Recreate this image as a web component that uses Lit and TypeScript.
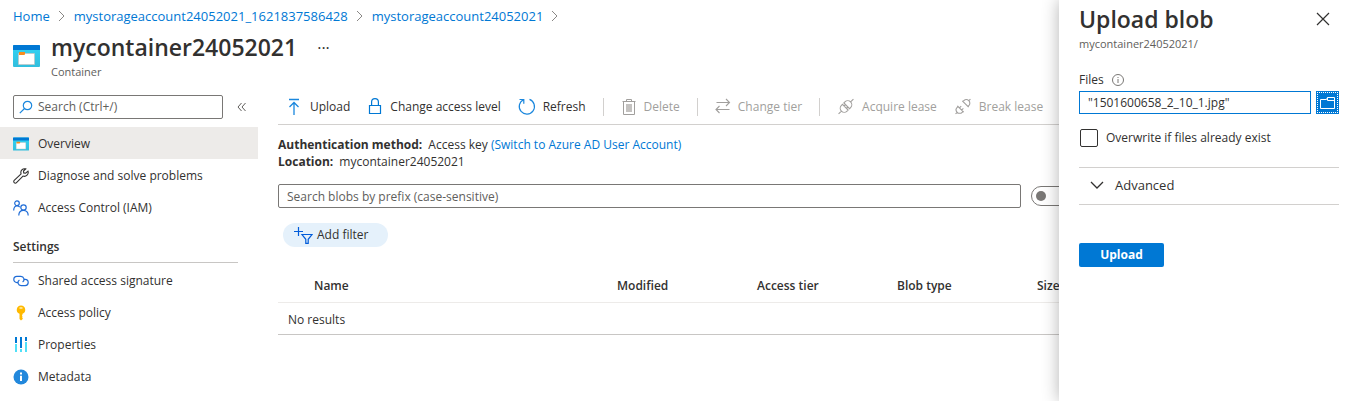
import { LitElement, html, svg, css } from "lit";
import { customElement, state } from "lit/decorators.js";

const icons = {
  container: svg`<svg viewBox="0 0 27 22" width="27" height="22"><defs><linearGradient id="cg" x1="0" y1="0" x2="0" y2="1"><stop offset="0" stop-color="#32d4f5"/><stop offset="1" stop-color="#32bedd"/></linearGradient></defs><rect width="27" height="22" rx="1" fill="url(#cg)"/><path d="M1 0h25a1 1 0 0 1 1 1v4H0V1a1 1 0 0 1 1-1z" fill="#0078d4"/><rect x="5" y="8" width="17" height="12" rx="1" fill="#b8cdd0"/><path d="M6 9h15v10H6z" fill="#fff"/><path d="M6 7h6v2.500l-1 .5H6z" fill="#f78d1e"/></svg>`,
  wrench: svg`<svg viewBox="0 0 16 16" width="16" height="16" fill="none" stroke="#323130" stroke-width="1.100"><path d="M15 3.200 12.600 5.200l-1.900-.3-.2-1.900L12.700.9a3.800 3.800 0 0 0-4.600 5L1.200 12.400a1.600 1.600 0 0 0 2.300 2.300L10 8.100a3.900 3.900 0 0 0 5-4.900z"/></svg>`,
  people: svg`<svg viewBox="0 0 16 16" width="16" height="16" fill="none" stroke="#1f6cd6" stroke-width="1.200"><circle cx="4" cy="3.200" r="2.300"/><path d="M.7 10.500C.7 7.500 2 5.800 4 5.800c1.300 0 2.200.5 2.800 1.300"/><circle cx="10.500" cy="7.500" r="2.700"/><path d="M5.800 15.500c0-3.200 2-5.200 4.700-5.200s4.700 2 4.700 5.200"/></svg>`,
  link: svg`<svg viewBox="0 0 16 16" width="16" height="16" fill="none" stroke="#1f6cd6" stroke-width="1.200"><path d="M5 9.600H3.900a3 3 0 0 1 0-6.200h4a3.100 3.100 0 0 1 1.700 5.700"/><path d="M11 6.400h1.100a3 3 0 0 1 0 6.200h-4a3.100 3.100 0 0 1-1.700-5.700"/></svg>`,
  key: svg`<svg viewBox="0 0 16 16" width="16" height="16"><path fill="#ffb900" d="M8 .5a4.300 4.300 0 0 0-1.500 8.300V14L8 15.500l1.700-1.600v-1l-.8-.8.8-.9-.8-.8.6-.8V8.800A4.300 4.300 0 0 0 8 .5z"/><path d="M6.500 3h3" stroke="#fff3c4" stroke-width="1.400"/></svg>`,
  sliders: svg`<svg viewBox="0 0 16 16" width="16" height="16"><path fill="#0078d4" d="M2 0h2v6H2zM7 0h2v11H7zM12 0h2v4h-2z"/><path fill="#50e0f8" d="M2 7h2v8H2zM7 12h2v3H7zM12 5h2v10h-2z"/></svg>`,
  info: svg`<svg viewBox="0 0 16 16" width="16" height="16"><circle cx="8" cy="8" r="7.500" fill="#2288dc"/><path d="M7 6.800h2V12H7zM7 3.600h2v2H7z" fill="#fff"/></svg>`,
  upload: svg`<svg viewBox="0 0 16 18" width="16" height="18" fill="none" stroke="#1b87dd" stroke-width="1.300"><path d="M2 1.500h10M7 17V4.500M2.500 9 7 4.500 11.500 9"/></svg>`,
  lock: svg`<svg viewBox="0 0 16 18" width="16" height="18" fill="none" stroke="#0078d4" stroke-width="1.200"><path d="M2.500 7.500h11v8h-11zM4.600 7.500V4a3.400 3.400 0 0 1 6.800 0v3.500"/></svg>`,
  refresh: svg`<svg viewBox="0 0 18 18" width="18" height="18" fill="none" stroke="#1b87dd" stroke-width="1.200"><path d="M11.500 1.400a7.600 7.600 0 1 1-6 .3M1.500 1.500h4.300v4.300"/></svg>`,
  trash: svg`<svg viewBox="0 0 16 18" width="16" height="18" fill="none" stroke="#a19f9d"><path d="M1.500 3.500h13M5.500 3V1.500h5V3M2.500 3.500v13h11v-13"/><path d="M5 6h6v8H5z" fill="#c4c2c0" stroke="none"/></svg>`,
  swap: svg`<svg viewBox="0 0 16 18" width="16" height="18" fill="none" stroke="#a19f9d" stroke-width="1.100"><path d="M1.500 4.500h13M11 1l3.500 3.500L11 8M14.500 11.500H1M4.500 8 1 11.500 4.500 15"/></svg>`,
  plug: svg`<svg viewBox="0 0 18 18" width="18" height="18" fill="none" stroke="#a19f9d" stroke-width="1.100"><g transform="rotate(-45 9 8.500)"><path d="M-1.500 8.500h4M15.500 8.500h4M8 4.500H6.500a4 4 0 0 0 0 8H8zM10 4.500h1.500a4 4 0 0 1 0 8H10zM8 6.800h2M8 10.200h2"/></g></svg>`,
  unplug: svg`<svg viewBox="0 0 18 18" width="18" height="18" fill="none" stroke="#a19f9d" stroke-width="1.100"><g transform="rotate(-45 9 8.500)"><path d="M-1.500 8.500h2.500M17 8.500h2.500M5.500 5H4.300a3.500 3.500 0 0 0 0 7h1.200zM12.500 5h1.200a3.500 3.500 0 0 1 0 7h-1.200zM5.500 7h2.500M5.500 10h2.500M12.500 4v9M5.500 4v9"/></g></svg>`,
  filter: svg`<svg viewBox="0 0 19 17" width="19" height="17" fill="none" stroke="#015cda" stroke-width="1.200"><path d="M4.500 0v9M0 4.500h9M8 7.500h10l-3.800 4.800v4h-2.400v-4z"/></svg>`,
  search: svg`<svg viewBox="0 0 14 14" width="14" height="14" fill="none" stroke="#1b87dd" stroke-width="1.200"><circle cx="8.500" cy="5.500" r="4.200"/><path d="M5.500 8.500.8 13.200"/></svg>`,
  crumb: svg`<svg viewBox="0 0 8 12" width="8" height="12" fill="none" stroke="#8a8886"><path d="m1 1 5 5-5 5"/></svg>`,
  collapse: svg`<svg viewBox="0 0 10 10" width="10" height="10" fill="none" stroke="#605e5c"><path d="M4.500 1 1 5l3.500 4M8.500 1 5 5l3.500 4"/></svg>`,
  close: svg`<svg viewBox="0 0 14 14" width="14" height="14" fill="none" stroke="#323130" stroke-width="1.200"><path d="m1 1 12 12M13 1 1 13"/></svg>`,
  chevron: svg`<svg viewBox="0 0 14 8" width="14" height="8" fill="none" stroke="#323130" stroke-width="1.300"><path d="m1 1 6 6 6-6"/></svg>`,
  hint: svg`<svg viewBox="0 0 12 12" width="12" height="12" fill="none" stroke="#797775"><circle cx="6" cy="6" r="5.500"/><path d="M6 5v4M6 3v1"/></svg>`,
  folder: svg`<svg viewBox="0 0 15 12" width="15" height="12" fill="none" stroke="#fff"><path d="M.5 2.500h6l1-2h7v11H.5zM7.500.5v3h7"/></svg>`,
};

const menu = [
  { label: "Overview", icon: icons.container, current: true },
  { label: "Diagnose and solve problems", icon: icons.wrench },
  { label: "Access Control (IAM)", icon: icons.people },
];
const settings = [
  { label: "Shared access signature", icon: icons.link },
  { label: "Access policy", icon: icons.key },
  { label: "Properties", icon: icons.sliders },
  { label: "Metadata", icon: icons.info },
];

@customElement("app-root")
export class AppRoot extends LitElement {
  @state() private fileName = '"1501600658_2_10_1.jpg"';

  static styles = css`
    :host { display: block; position: relative; min-height: 100vh; overflow: hidden; background: #fff; color: #323130; font: 12px/16px "Segoe UI", "Open Sans", "Noto Sans", sans-serif; }
    * { box-sizing: border-box; }
    svg { display: block; flex: none; }
    a { color: #0078d4; text-decoration: none; }
    button, input { font: inherit; color: inherit; margin: 0; }
    button { border: 0; padding: 0; background: none; display: flex; align-items: center; }
    h1, h2, h3, p, ul { margin: 0; padding: 0; }
    input::placeholder { color: #605e5c; opacity: 1; }
    .crumbs { display: flex; align-items: center; gap: 8px; height: 31px; padding: 0 13px; font-size: 13px; }
    .head { display: flex; align-items: flex-start; gap: 11px; height: 48px; padding: 0 13px; }
    .head-icon { padding-top: 14px; }
    .title { font-size: 23px; line-height: 32px; font-weight: 600; }
    .sub { padding-top: 1px; font-size: 11px; line-height: 16px; color: #605e5c; }
    .more { padding: 7px 9px; line-height: 20px; font-size: 16px; }
    .body { display: flex; align-items: flex-start; }
    .side { flex: none; width: 258px; padding-top: 16px; }
    .side-search { display: flex; align-items: center; gap: 14px; padding-left: 13px; margin-bottom: 8px; }
    .search-box { display: flex; align-items: center; gap: 5px; width: 210px; height: 24px; padding: 0 5px; border: 1px solid #797775; border-radius: 2px; }
    .search-box input { border: 0; padding: 0; outline: 0; min-width: 0; flex: 1; background: none; }
    .nav { list-style: none; }
    .item { display: flex; align-items: center; gap: 9px; height: 32px; padding: 2px 0 0 13px; color: #323130; }
    .item svg { width: 16px; height: 16px; }
    .current { background: #edebe9; }
    .group { margin: 16px 20px 1px 13px; padding-bottom: 7px; border-bottom: 1px solid #c8c6c4; font-size: 12px; line-height: 16px; font-weight: 600; }
    .main { flex: 1; min-width: 0; padding: 10px 20px 0; }
    .tools { display: flex; align-items: center; gap: 17px; height: 36px; padding-left: 9px; border-bottom: 1px solid #d2d0ce; white-space: nowrap; }
    .tool { gap: 7px; }
    .tool:disabled { color: #a19f9d; }
    .rule { width: 1px; height: 18px; background: #d2d0ce; }
    .facts { margin-top: 11px; line-height: 17px; }
    .facts b { margin-right: 3px; }
    .query { display: flex; align-items: center; gap: 10px; margin-top: 14px; }
    .query-box { flex: 1; min-width: 0; height: 24px; padding: 0 8px; border: 1px solid #797775; border-radius: 2px; }
    .switch { flex: none; width: 40px; height: 20px; margin: 0 255px 0 0; border: 1px solid #797775; border-radius: 10px; appearance: none; padding: 4px; }
    .switch::before { content: ""; display: block; width: 10px; height: 10px; border-radius: 5px; background: #797775; }
    .filter { gap: 4px; height: 24px; margin: 15px 0 0 5px; padding: 0 20px 0 11px; border-radius: 12px; background: #e5f1fb; }
    .blobs { width: 100%; margin-top: 22px; border-collapse: collapse; table-layout: fixed; }
    .blobs th { height: 33px; padding: 2px 0 0; text-align: left; font-weight: 600; border-bottom: 1px solid #edebe9; }
    .blobs .name { padding-left: 36px; }
    .blobs td { height: 32px; padding: 3px 10px 0; border-bottom: 1px solid #c8c6c4; }
    .mid { width: 140px; }
    .last { width: 289px; }
    .panel { position: absolute; top: 0; right: 0; bottom: 0; width: 287px; padding: 3px 7px 0 20px; background: #fff; box-shadow: 0 0 16px rgba(0, 0, 0, 0.3); }
    .panel-head { display: flex; justify-content: space-between; align-items: center; padding-right: 9px; }
    .label { display: flex; align-items: center; gap: 8px; margin-top: 20px; }
    .files { display: flex; gap: 5px; margin-top: 3px; }
    .file { flex: 1; min-width: 0; height: 23px; padding: 0 8px; border: 1px solid #0078d4; }
    .browse { width: 23px; height: 23px; justify-content: center; background: #0078d4; outline: 1px dotted #fff; outline-offset: -2px; }
    .check { display: flex; align-items: center; gap: 8px; margin: 15px 0 20px 1px; }
    .check input { appearance: none; width: 18px; height: 18px; border: 1px solid #323130; border-radius: 2px; }
    .advanced { width: 100%; height: 38px; gap: 11px; padding: 0 0 2px 11px; border: solid #d2d0ce; border-width: 1px 0; font-size: 13px; }
    .submit { justify-content: center; width: 85px; height: 24px; margin-top: 38px; border-radius: 2px; background: #0078d4; color: #fff; font-weight: 700; }
  `;

  private nav(items: { label: string; icon: unknown; current?: boolean }[]) {
    return html`<ul class="nav">${items.map((i) => html`<li><a href="#" class="item ${i.current ? "current" : ""}">${i.icon}<span>${i.label}</span></a></li>`)}</ul>`;
  }

  private tool(label: string, icon: unknown, disabled = false) {
    return html`<button class="tool" ?disabled=${disabled}>${icon}<span>${label}</span></button>`;
  }

  render() {
    return html`
      <nav class="crumbs">
        <a href="#">Home</a>${icons.crumb}
        <a href="#">mystorageaccount24052021_1621837586428</a>${icons.crumb}
        <a href="#">mystorageaccount24052021</a>${icons.crumb}
      </nav>
      <header class="head">
        <div class="head-icon">${icons.container}</div>
        <div><h1 class="title">mycontainer24052021</h1><p class="sub">Container</p></div>
        <button class="more" aria-label="More">···</button>
      </header>
      <div class="body">
        <aside class="side">
          <div class="side-search">
            <label class="search-box">${icons.search}<input placeholder="Search (Ctrl+/)" aria-label="Search" /></label>
            <button aria-label="Collapse">${icons.collapse}</button>
          </div>
          ${this.nav(menu)}
          <h3 class="group">Settings</h3>
          ${this.nav(settings)}
        </aside>
        <main class="main">
          <div class="tools">
            ${this.tool("Upload", icons.upload)}
            ${this.tool("Change access level", icons.lock)}
            ${this.tool("Refresh", icons.refresh)}
            <span class="rule"></span>
            ${this.tool("Delete", icons.trash, true)}
            <span class="rule"></span>
            ${this.tool("Change tier", icons.swap, true)}
            <span class="rule"></span>
            ${this.tool("Acquire lease", icons.plug, true)}
            ${this.tool("Break lease", icons.unplug, true)}
          </div>
          <div class="facts">
            <p><b>Authentication method:</b> Access key <a href="#">(Switch to Azure AD User Account)</a></p>
            <p><b>Location:</b> mycontainer24052021</p>
          </div>
          <div class="query">
            <input class="query-box" placeholder="Search blobs by prefix (case-sensitive)" aria-label="Search blobs" />
            <input class="switch" type="checkbox" role="switch" aria-label="Show deleted blobs" />
          </div>
          <button class="filter">${icons.filter}<span>Add filter</span></button>
          <table class="blobs">
            <thead><tr><th class="name">Name</th><th class="mid">Modified</th><th class="mid">Access tier</th><th class="mid">Blob type</th><th class="last">Size</th></tr></thead>
            <tbody><tr><td colspan="5">No results</td></tr></tbody>
          </table>
        </main>
      </div>
      <section class="panel">
        <div class="panel-head"><h2 class="title">Upload blob</h2><button aria-label="Close">${icons.close}</button></div>
        <p class="sub">mycontainer24052021/</p>
        <div class="label"><label for="file">Files</label>${icons.hint}</div>
        <div class="files">
          <input id="file" class="file" .value=${this.fileName} />
          <button class="browse" aria-label="Browse">${icons.folder}</button>
        </div>
        <label class="check"><input type="checkbox" /><span>Overwrite if files already exist</span></label>
        <button class="advanced">${icons.chevron}<span>Advanced</span></button>
        <button class="submit">Upload</button>
      </section>
    `;
  }
}
